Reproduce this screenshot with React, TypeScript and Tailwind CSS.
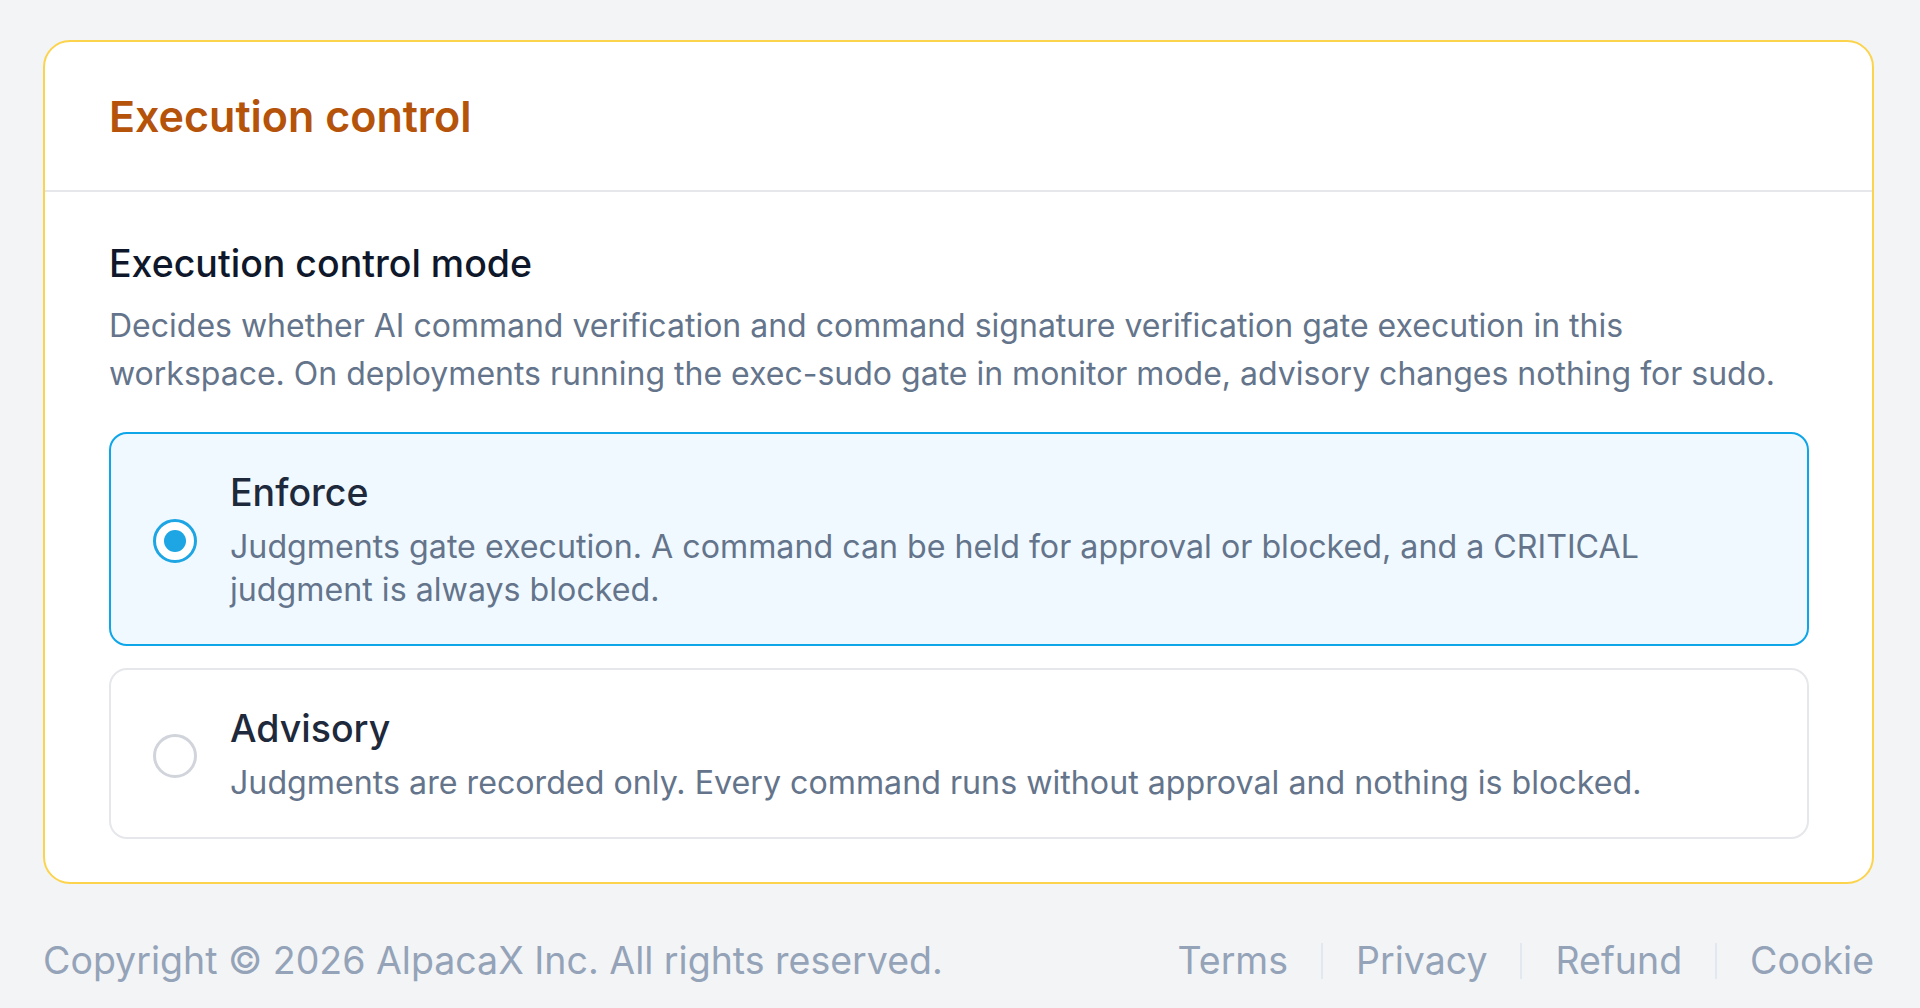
import { useState } from "react";

type Mode = "enforce" | "advisory";

const MODES: { id: Mode; label: string; description: string }[] = [
  {
    id: "enforce",
    label: "Enforce",
    description:
      "Judgments gate execution. A command can be held for approval or blocked, and a CRITICAL judgment is always blocked.",
  },
  {
    id: "advisory",
    label: "Advisory",
    description:
      "Judgments are recorded only. Every command runs without approval and nothing is blocked.",
  },
];

const FOOTER_LINKS = ["Terms", "Privacy", "Refund", "Cookie"];

export default function App() {
  const [mode, setMode] = useState<Mode>("enforce");

  return (
    <div
      className="min-h-screen bg-[#f3f4f6] pl-[43px] pr-[46px] pt-[40px]"
      style={{ fontFamily: "Inter, 'Noto Sans', sans-serif" }}
    >
      <section className="rounded-[27px] border-[2.5px] border-[#fcd34d] bg-white">
        <div className="border-b-2 border-[#e5e7eb] px-[64px] py-[48px]">
          <h2 className="text-[43px] font-semibold leading-[52px] text-[#b45309]">
            Execution control
          </h2>
        </div>

        <div className="pl-[64px] pr-[63px] pt-[50px] pb-[43px]">
          <h3 className="text-[37.5px] font-medium leading-[44px] text-[#0f172a]">
            Execution control mode
          </h3>
          <p className="mt-[16px] pr-[8px] text-[32px] leading-[47.5px] text-[#64748b]">
            Decides whether AI command verification and command signature
            verification gate execution in this workspace. On deployments
            running the exec-sudo gate in monitor mode, advisory changes
            nothing for sudo.
          </p>

          <div className="mt-[35px] flex flex-col gap-[22px]">
            {MODES.map((m) => (
              <ModeOption
                key={m.id}
                label={m.label}
                description={m.description}
                active={mode === m.id}
                onSelect={() => setMode(m.id)}
              />
            ))}
          </div>
        </div>
      </section>

      <footer className="flex items-center justify-between pt-[55px] pb-[56px] text-[37.5px] leading-[44px] text-[#94a3b8]">
        <span>Copyright © 2026 AlpacaX Inc. All rights reserved.</span>
        <nav className="flex items-center">
          {FOOTER_LINKS.map((link, i) => (
            <span key={link} className="flex items-center">
              {i > 0 ? (
                <span className="mx-[33px] h-[36px] w-[2px] bg-[#e2e8f0]" />
              ) : null}
              <a href="#" className="hover:text-[#64748b]">
                {link}
              </a>
            </span>
          ))}
        </nav>
      </footer>
    </div>
  );
}

function ModeOption({
  label,
  description,
  active,
  onSelect,
}: {
  label: string;
  description: string;
  active: boolean;
  onSelect: () => void;
}) {
  return (
    <button
      type="button"
      onClick={onSelect}
      className={`flex w-full items-center gap-[33px] rounded-[18px] border-2 pt-[37px] pb-[33px] pl-[42px] pr-[40px] text-left ${
        active ? "border-[#0ea5e9] bg-[#f0f9ff]" : "border-[#e5e7eb] bg-white"
      }`}
    >
      <span
        className={`flex h-[44px] w-[44px] shrink-0 items-center justify-center rounded-full border-[3px] ${
          active ? "border-[#1ea5e3] bg-white" : "border-[#d1d5db] bg-white"
        }`}
      >
        {active ? <span className="h-[22px] w-[22px] rounded-full bg-[#1ea5e3]" /> : null}
      </span>
      <span className="flex flex-col gap-[10px]">
        <span className="text-[37.5px] font-medium leading-[44px] text-[#1e293b]">
          {label}
        </span>
        <span className="text-[32.2px] leading-[43px] text-[#64748b]">
          {description}
        </span>
      </span>
    </button>
  );
}
